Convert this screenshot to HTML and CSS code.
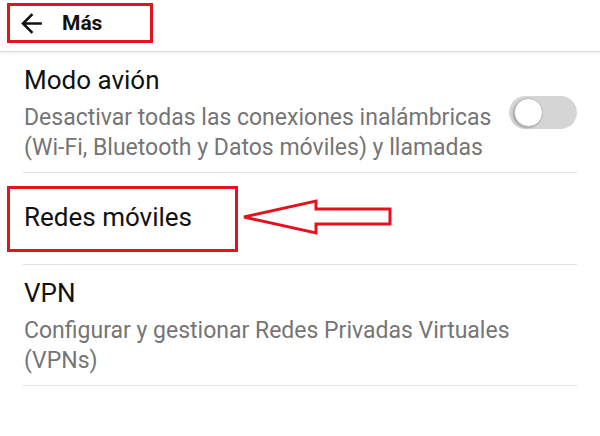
FILE: index.html
```html
<!DOCTYPE html>
<html lang="es">
<head>
    <meta charset="UTF-8">
    <meta name="viewport" content="width=device-width, initial-scale=1.0">
    <title>Más</title>
    <link rel="stylesheet" href="styles.css">
</head>
<body>

<header class="topbar">
    <div class="mark mark-header">
        <svg class="back-icon" viewBox="0 0 24 24" width="31" height="31">
            <path d="M20 11H7.83l5.59-5.59L12 4l-8 8 8 8 1.41-1.41L7.83 13H20v-2z" fill="#111"/>
        </svg>
        <span class="topbar-title">Más</span>
    </div>
</header>

<div class="list">
    <div class="item">
        <div class="item-text">
            <div class="item-title">Modo avión</div>
            <div class="item-summary">Desactivar todas las conexiones inalámbricas (Wi-Fi, Bluetooth y Datos móviles) y llamadas</div>
        </div>
        <div class="switch"><span class="knob"></span></div>
    </div>

    <div class="item item-single">
        <div class="mark mark-row">
            <span class="item-title">Redes móviles</span>
        </div>
        <svg class="pointer" viewBox="0 0 152 38" width="152" height="38">
            <polygon points="3,19 75,3 75,11 149,11 149,26 75,26 75,35" fill="none" stroke="#e3121d" stroke-width="3" stroke-linejoin="miter"/>
        </svg>
    </div>

    <div class="item">
        <div class="item-text">
            <div class="item-title">VPN</div>
            <div class="item-summary">Configurar y gestionar Redes Privadas Virtuales (VPNs)</div>
        </div>
    </div>
</div>

</body>
</html>
```

FILE: styles.css
```css
body {
    margin: 0;
    background-color: #fff;
    font-family: Roboto, "Noto Sans", sans-serif;
    color: #111;
}

.topbar {
    height: 52px;
    border-bottom: 1px solid #dcdcdc;
    box-shadow: 0 1px 2px rgba(0, 0, 0, 0.08);
    padding-top: 3px;
    box-sizing: border-box;
}

.mark {
    border: 3px solid #e3121d;
    box-sizing: border-box;
    display: flex;
    align-items: center;
}

.mark-header {
    margin-left: 7px;
    width: 146px;
    height: 40px;
    padding-left: 6px;
    gap: 15px;
}

.topbar-title {
    font-size: 21px;
    font-weight: bold;
    color: #111;
}

.list {
    margin: 0 23px;
}

.item {
    display: flex;
    align-items: center;
    gap: 4px;
    padding: 13px 0 9px 1px;
    border-bottom: 1px solid #e2e2e2;
}

.item-text {
    flex: 1;
}

.item-title {
    font-size: 26px;
    line-height: 30px;
    color: #111;
}

.item-summary {
    font-size: 23px;
    line-height: 30px;
    color: #757575;
    margin-top: 8px;
    max-width: 500px;
}

.switch {
    width: 68px;
    height: 33px;
    border-radius: 17px;
    background-color: #d5d5d5;
    display: flex;
    align-items: center;
    padding-left: 5px;
    box-sizing: border-box;
    margin-top: -3px;
}

.knob {
    width: 29px;
    height: 29px;
    border-radius: 50%;
    background-color: #fff;
    border: 1px solid #bbb;
    box-sizing: border-box;
    box-shadow: -1px 1px 2px rgba(0, 0, 0, 0.25);
}

.item-single {
    padding: 13px 0 12px 0;
    gap: 3px;
}

.mark-row {
    margin-left: -16px;
    width: 231px;
    height: 66px;
    padding-left: 14px;
    padding-bottom: 4px;
}

.pointer {
    display: block;
    margin-top: -5px;
}
```
